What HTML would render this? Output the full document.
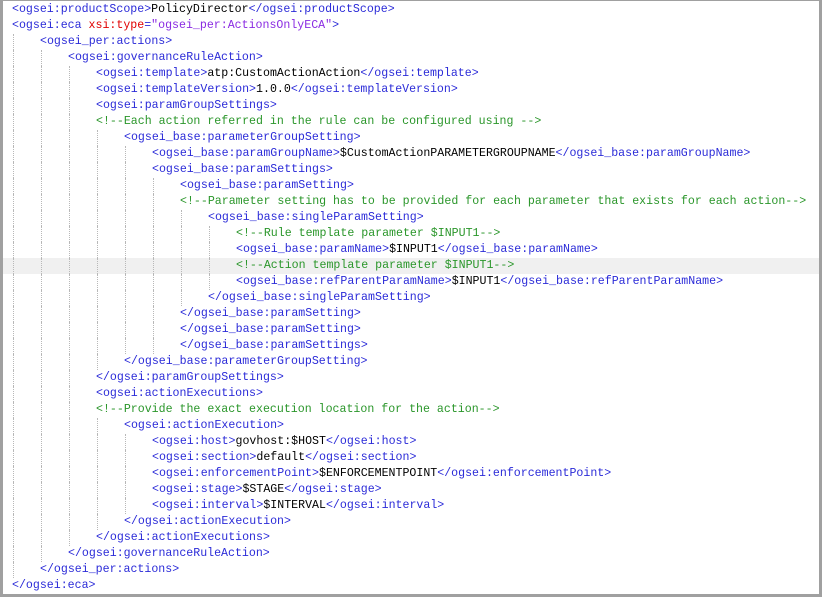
<!DOCTYPE html>
<html><head><meta charset="utf-8"><style>
html,body{margin:0;padding:0;background:#fff;}
#f{position:relative;width:822px;height:597px;overflow:hidden;background:#fff;box-sizing:border-box;border-left:3px solid #a0a0a0;border-right:3px solid #a0a0a0;border-bottom:3px solid #a0a0a0;border-top:1px solid #a0a0a0;}
.l{position:absolute;left:0;width:819px;height:16px;font-family:"Liberation Mono",monospace;font-size:11.6px;line-height:16px;white-space:pre;color:#000;}
.t{position:absolute;top:0;}
.g{position:absolute;top:0;height:16px;border-left:1px dotted #b8b8b8;}
.b{color:#2b2bd8}.c{color:#2a962a}.r{color:#e00000}.p{color:#8a2be2}
.hl{background:#f0f0f0}
</style></head><body><div id="f"></div>
<script>
var L=[
[0,'<b class="b">&lt;ogsei:productScope&gt;</b>PolicyDirector<b class="b">&lt;/ogsei:productScope&gt;</b>'],
[0,'<b class="b">&lt;ogsei:eca </b><b class="r">xsi:type</b><b class="b">=</b><b class="p">"ogsei_per:ActionsOnlyECA"</b><b class="b">&gt;</b>'],
[1,'<b class="b">&lt;ogsei_per:actions&gt;</b>'],
[2,'<b class="b">&lt;ogsei:governanceRuleAction&gt;</b>'],
[3,'<b class="b">&lt;ogsei:template&gt;</b>atp:CustomActionAction<b class="b">&lt;/ogsei:template&gt;</b>'],
[3,'<b class="b">&lt;ogsei:templateVersion&gt;</b>1.0.0<b class="b">&lt;/ogsei:templateVersion&gt;</b>'],
[3,'<b class="b">&lt;ogsei:paramGroupSettings&gt;</b>'],
[3,'<b class="c">&lt;!--Each action referred in the rule can be configured using --&gt;</b>'],
[4,'<b class="b">&lt;ogsei_base:parameterGroupSetting&gt;</b>'],
[5,'<b class="b">&lt;ogsei_base:paramGroupName&gt;</b>$CustomActionPARAMETERGROUPNAME<b class="b">&lt;/ogsei_base:paramGroupName&gt;</b>'],
[5,'<b class="b">&lt;ogsei_base:paramSettings&gt;</b>'],
[6,'<b class="b">&lt;ogsei_base:paramSetting&gt;</b>'],
[6,'<b class="c">&lt;!--Parameter setting has to be provided for each parameter that exists for each action--&gt;</b>'],
[7,'<b class="b">&lt;ogsei_base:singleParamSetting&gt;</b>'],
[8,'<b class="c">&lt;!--Rule template parameter $INPUT1--&gt;</b>'],
[8,'<b class="b">&lt;ogsei_base:paramName&gt;</b>$INPUT1<b class="b">&lt;/ogsei_base:paramName&gt;</b>'],
[8,'<b class="c">&lt;!--Action template parameter $INPUT1--&gt;</b>',1],
[8,'<b class="b">&lt;ogsei_base:refParentParamName&gt;</b>$INPUT1<b class="b">&lt;/ogsei_base:refParentParamName&gt;</b>'],
[7,'<b class="b">&lt;/ogsei_base:singleParamSetting&gt;</b>'],
[6,'<b class="b">&lt;/ogsei_base:paramSetting&gt;</b>'],
[6,'<b class="b">&lt;/ogsei_base:paramSetting&gt;</b>'],
[6,'<b class="b">&lt;/ogsei_base:paramSettings&gt;</b>'],
[4,'<b class="b">&lt;/ogsei_base:parameterGroupSetting&gt;</b>'],
[3,'<b class="b">&lt;/ogsei:paramGroupSettings&gt;</b>'],
[3,'<b class="b">&lt;ogsei:actionExecutions&gt;</b>'],
[3,'<b class="c">&lt;!--Provide the exact execution location for the action--&gt;</b>'],
[4,'<b class="b">&lt;ogsei:actionExecution&gt;</b>'],
[5,'<b class="b">&lt;ogsei:host&gt;</b>govhost:$HOST<b class="b">&lt;/ogsei:host&gt;</b>'],
[5,'<b class="b">&lt;ogsei:section&gt;</b>default<b class="b">&lt;/ogsei:section&gt;</b>'],
[5,'<b class="b">&lt;ogsei:enforcementPoint&gt;</b>$ENFORCEMENTPOINT<b class="b">&lt;/ogsei:enforcementPoint&gt;</b>'],
[5,'<b class="b">&lt;ogsei:stage&gt;</b>$STAGE<b class="b">&lt;/ogsei:stage&gt;</b>'],
[5,'<b class="b">&lt;ogsei:interval&gt;</b>$INTERVAL<b class="b">&lt;/ogsei:interval&gt;</b>'],
[4,'<b class="b">&lt;/ogsei:actionExecution&gt;</b>'],
[3,'<b class="b">&lt;/ogsei:actionExecutions&gt;</b>'],
[2,'<b class="b">&lt;/ogsei:governanceRuleAction&gt;</b>'],
[1,'<b class="b">&lt;/ogsei_per:actions&gt;</b>'],
[0,'<b class="b">&lt;/ogsei:eca&gt;</b>']
];
var h='';
L.forEach(function(x,i){
 h+='<div class="l'+(x[2]?' hl':'')+'" style="top:'+(1+16*i)+'px">';
 for(var k=0;k<x[0];k++)h+='<div class="g" style="left:'+(10+28*k)+'px"></div>';
 h+='<div class="t" style="left:'+(9+28*x[0])+'px">'+x[1].replace(/<b /g,'<span ').replace(/<\/b>/g,'</span>')+'</div></div>';
});
document.getElementById('f').innerHTML=h;
</script></body></html>
